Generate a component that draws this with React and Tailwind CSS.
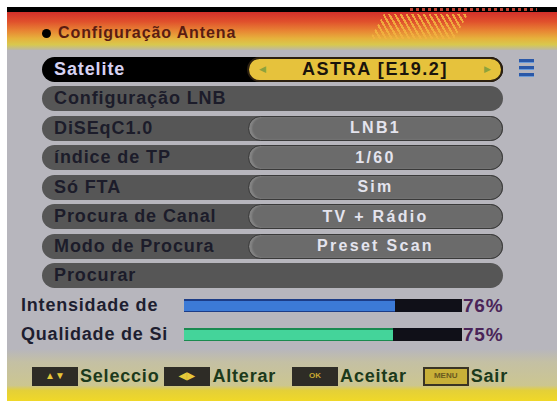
import React from 'react';

const rows = [
  { label: 'Satelite', value: 'ASTRA [E19.2]', kind: 'active' },
  { label: 'Configuração LNB', kind: 'full' },
  { label: 'DiSEqC1.0', value: 'LNB1' },
  { label: 'índice de TP', value: '1/60' },
  { label: 'Só FTA', value: 'Sim' },
  { label: 'Procura de Canal', value: 'TV + Rádio' },
  { label: 'Modo de Procura', value: 'Preset Scan' },
  { label: 'Procurar', kind: 'full' },
];

function Row({ label, value, kind }) {
  if (kind === 'active') {
    return (
      <div className="h-[25px] w-[461px] rounded-full bg-black flex items-center">
        <span className="w-[205px] pl-[12px] text-[#d6d2f2] text-[18px] font-bold tracking-[0.9px]">{label}</span>
        <div className="flex-1 h-[25px] rounded-full bg-[#e6c23c] border-2 border-[#2c2010] flex items-center justify-between px-[10px]">
          <span className="text-[9px] text-[#8da23c]">◀</span>
          <span className="text-[18px] font-bold tracking-[1.6px] text-[#1a140c]">{value}</span>
          <span className="text-[9px] text-[#8da23c]">▶</span>
        </div>
      </div>
    );
  }
  if (kind === 'full') {
    return (
      <div className="h-[25px] w-[461px] rounded-full bg-[#565656] flex items-center">
        <span className="pl-[12px] text-[#1c1c2a] text-[18px] font-bold tracking-[0.9px]">{label}</span>
      </div>
    );
  }
  return (
    <div className="h-[25px] w-[461px] rounded-full bg-[#565656] flex items-center">
      <span className="w-[206px] pl-[12px] text-[#1c1c2a] text-[18px] font-bold tracking-[0.9px]">{label}</span>
      <div className="flex-1 h-full rounded-full bg-[#6b6b6b] border border-[#3a3a3a] shadow-[inset_3px_0_2px_#858585] flex items-center justify-center">
        <span className="text-[16px] font-bold tracking-[2.3px] text-[#e4e4ee]">{value}</span>
      </div>
    </div>
  );
}

function Signal({ label, pct, fill, edge }) {
  return (
    <div className="flex items-center h-[29px]">
      <span className="w-[163px] text-[18px] font-bold tracking-[0.8px] text-[#1e1e30] whitespace-nowrap">{label}</span>
      <div className="w-[278px] h-[13px] bg-[#101018] flex">
        <div className={`h-full ${fill} border-t-2 border-b ${edge}`} style={{ width: `${pct}%` }} />
      </div>
      <span className="ml-[1px] text-[19px] font-bold tracking-[0.8px] text-[#4a2458]">{pct}%</span>
    </div>
  );
}

function Key({ children, className }) {
  return (
    <span className={`w-[46px] h-[19px] flex items-center justify-center ${className}`}>{children}</span>
  );
}

export default function App() {
  return (
    <div className="w-[557px] h-[401px] bg-white flex overflow-hidden font-['Liberation_Sans',Arial,sans-serif]">
      <div className="w-[7px] bg-white" />
      <div className="flex-1 flex flex-col">
        <div className="h-[7px] bg-white" />
        <div className="h-[5px] bg-black flex justify-end pr-[20px] items-center">
          <div className="w-[127px] h-[3px] bg-[repeating-linear-gradient(90deg,#c04030_0px,#c04030_3px,transparent_3px,transparent_6px)]" />
        </div>
        <header className="h-[38px] relative bg-[linear-gradient(to_bottom,#d3302a_0%,#e0502c_25%,#e88634_50%,#e6b23c_70%,#d8c84e_86%,#bcb8a4_100%)] flex items-center pl-[35px]">
          <span className="w-[9px] h-[9px] rounded-full bg-black mt-[6px]" />
          <span className="ml-[7px] text-[16px] font-bold tracking-[0.9px] text-[#5a1c12] mt-[4px]">Configuração Antena</span>
          <div className="absolute left-[363px] top-[2px] w-[98px] h-[25px] bg-[repeating-linear-gradient(60deg,transparent_0px,transparent_3px,#f2b240_3px,#f2b240_5px)] [clip-path:polygon(14%_0,100%_0,86%_100%,0_100%)] opacity-90" />
        </header>
        <main className="flex-1 bg-[#b7b6bd] flex flex-col">
          <div className="flex pl-[35px] pt-[7px]">
            <div className="flex flex-col gap-[4.5px]">
              {rows.map((r) => (
                <Row key={r.label} {...r} />
              ))}
            </div>
            <div className="ml-[16px] mt-[2px] flex flex-col gap-[3px]">
              <span className="w-[15px] h-[4px] bg-[#2a58a8] border-b border-[#6a9ad8]" />
              <span className="w-[15px] h-[4px] bg-[#2a58a8] border-b border-[#6a9ad8]" />
              <span className="w-[15px] h-[4px] bg-[#2a58a8] border-b border-[#6a9ad8]" />
            </div>
          </div>
          <div className="flex flex-col pl-[14px] pt-[3px]">
            <Signal label="Intensidade de" pct={76} fill="bg-[#3c7ad6]" edge="border-[#1c3c86]" />
            <Signal label="Qualidade de Si" pct={75} fill="bg-[#44d49a]" edge="border-[#1a8a50]" />
          </div>
        </main>
        <footer className="h-[52px] bg-[linear-gradient(to_bottom,#b7b6bd_0%,#c4c0a4_25%,#ccc690_70%,#e4d038_80%,#f0d828_100%)] flex items-center pl-[25px] pt-[2px] text-[18px] font-bold tracking-[0.8px] text-[#1c3a1c]">
          <Key className="bg-[#2e2c26] text-[#e6c83a] text-[10px] leading-none tracking-normal">▲▼</Key>
          <span className="ml-[2px]">Seleccio</span>
          <Key className="ml-[5px] bg-[#2e2c26] text-[#e6c83a] text-[10px] leading-none tracking-normal">◀▶</Key>
          <span className="ml-[2px]">Alterar</span>
          <Key className="ml-[16px] bg-[#2e2c26] text-[#c8a830] text-[8px] leading-none tracking-normal">OK</Key>
          <span className="ml-[2px]">Aceitar</span>
          <Key className="ml-[16px] bg-[#c8b038] border-2 border-[#3a3424] text-[#6a5a20] text-[8px] leading-none tracking-normal">MENU</Key>
          <span className="ml-[2px]">Sair</span>
        </footer>
      </div>
    </div>
  );
}
